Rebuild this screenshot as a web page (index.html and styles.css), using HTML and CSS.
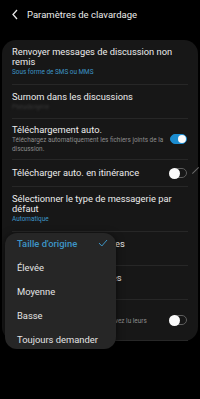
FILE: index.html
```html
<!DOCTYPE html>
<html lang="fr">
<head>
  <meta charset="UTF-8">
  <meta name="viewport" content="width=device-width, initial-scale=1.0">
  <title>Paramètres de clavardage</title>
  <link rel="stylesheet" href="styles.css">
</head>
<body>
  <div class="screen">
    <header class="top-bar">
      <svg class="back" width="8" height="11" viewBox="0 0 8 11">
        <path d="M6 1 L2 5.5 L6 10" fill="none" stroke="#e6e6e6" stroke-width="1.3"/>
      </svg>
      <span class="top-title">Paramètres de clavardage</span>
    </header>

    <div class="card">
      <div class="row r-tall">
        <div class="text">
          <div class="title">Renvoyer messages de discussion non remis</div>
          <div class="sub blue">Sous forme de SMS ou MMS</div>
        </div>
      </div>

      <div class="row r-two">
        <div class="text">
          <div class="title">Surnom dans les discussions</div>
          <div class="sub hidden-sub">Pseudonyme</div>
        </div>
      </div>

      <div class="row r-dl">
        <div class="text">
          <div class="title">Téléchargement auto.</div>
          <div class="sub">Téléchargez automatiquement les fichiers joints de la discussion.</div>
        </div>
        <span class="switch on"></span>
      </div>

      <div class="row r-one">
        <div class="text">
          <div class="title">Télécharger auto. en itinérance</div>
        </div>
        <span class="switch"></span>
        <span class="edge-mark"></span>
      </div>

      <div class="row r-tall">
        <div class="text">
          <div class="title">Sélectionner le type de messagerie par défaut</div>
          <div class="sub blue">Automatique</div>
        </div>
      </div>

      <div class="row r-two">
        <div class="text">
          <div class="title">Taille des images envoyées</div>
          <div class="sub blue">Taille d'origine</div>
        </div>
      </div>

      <div class="row r-two">
        <div class="text">
          <div class="title">Taille des vidéos envoyées</div>
          <div class="sub blue">Taille d'origine</div>
        </div>
      </div>

      <div class="row r-last">
        <div class="text">
          <div class="title">Accusés</div>
          <div class="sub">Indiquez aux expéditeurs que vous avez lu leurs messages.</div>
        </div>
        <span class="switch"></span>
      </div>

      <div class="menu">
        <div class="menu-item selected">
          <span>Taille d'origine</span>
          <svg width="10" height="8" viewBox="0 0 10 8">
            <path d="M1 4 L3.8 7 L9 1" fill="none" stroke="#3d95c6" stroke-width="1"/>
          </svg>
        </div>
        <div class="menu-item">Élevée</div>
        <div class="menu-item">Moyenne</div>
        <div class="menu-item">Basse</div>
        <div class="menu-item">Toujours demander</div>
      </div>
    </div>
  </div>
</body>
</html>
```

FILE: styles.css
```css
/* Chat settings, dark theme */
body {
  margin: 0;
  background: #000;
  font-family: Roboto, "Noto Sans", sans-serif;
  color: #ececec;
}

.screen {
  width: 200px;
  height: 399px;
  overflow: hidden;
}

/* ***** Header ***** */
.top-bar {
  display: flex;
  align-items: center;
  height: 28px;
  padding-left: 11px;
}

.back {
  margin-right: 8px;
}

.top-title {
  font-size: 9.5px;
}

/* ***** Card ***** */
.card {
  position: relative;
  margin: 12px 2px 0;
  background: #171717;
  border-radius: 14px;
}

.row {
  display: flex;
  align-items: center;
  margin: 0 10px;
  border-bottom: 1px solid #272727;
  box-sizing: border-box;
}

.row:last-of-type {
  border-bottom: none;
}

.r-tall { height: 45px; }
.r-two  { height: 34px; }
.r-dl   { height: 41px; }
.r-one  { height: 27px; }
.r-last { height: 41px; }

.text {
  flex: 1;
  min-width: 0;
}

.title {
  font-size: 9.3px;
  line-height: 10px;
}

.sub {
  margin-top: 1px;
  font-size: 6.4px;
  line-height: 9px;
  color: #8c8c8c;
  padding-right: 3px;
}

.sub.blue {
  color: #3d95c6;
}

.hidden-sub {
  color: #3a3a3a;
  filter: blur(1px);
}

/* ***** Switches ***** */
.switch {
  position: relative;
  flex: none;
  width: 17px;
  height: 10px;
  margin-right: 1px;
  border: 1px solid #5e5e5e;
  border-radius: 6px;
  box-sizing: border-box;
}

.switch::after {
  content: '';
  position: absolute;
  left: -2px;
  top: -1.5px;
  width: 11px;
  height: 11px;
  border-radius: 50%;
  background: #fafafa;
}

.switch.on {
  background: #1b8ccf;
  border-color: #1b8ccf;
}

.switch.on::after {
  left: auto;
  right: 0;
  top: 0;
  width: 8px;
  height: 8px;
}

.edge-mark {
  position: absolute;
  right: -2px;
  width: 9px;
  height: 1px;
  background: #6a6a6a;
  transform: rotate(-45deg);
  margin-top: -6px;
}

/* ***** Popup menu ***** */
.menu {
  position: absolute;
  left: 3px;
  top: 193px;
  width: 111px;
  height: 116px;
  box-sizing: border-box;
  padding: 0 8px 0 12px;
  display: flex;
  flex-direction: column;
  justify-content: center;
  gap: 4px;
  background: #262626;
  border-radius: 12px;
  box-shadow: 0 2px 8px rgba(0, 0, 0, 0.6);
}

.menu-item {
  display: flex;
  align-items: center;
  justify-content: space-between;
  height: 20px;
  font-size: 9.4px;
  color: #e4e4e4;
}

.menu-item.selected {
  color: #3d95c6;
  font-weight: 500;
}
```
